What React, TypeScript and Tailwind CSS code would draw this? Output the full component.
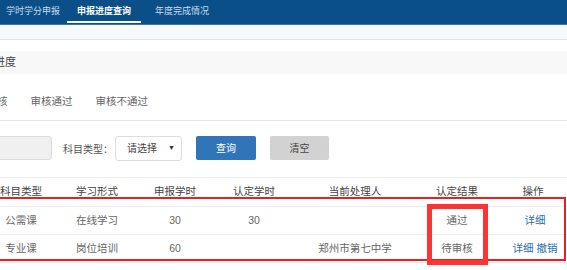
const rows = [
  { kind: '公需课', form: '在线学习', apply: '30', approved: '30', handler: '', result: '通过', ops: ['详细'] },
  { kind: '专业课', form: '岗位培训', apply: '60', approved: '', handler: '郑州市第七中学', result: '待审核', ops: ['详细', '撤销'] },
  { kind: '公需课', form: '在线学习', apply: '30', approved: '30', handler: '', result: '通过', ops: ['详细'] },
];

const cols = 'grid grid-cols-[76px_76px_80px_78px_124px_80px_72px]';

export default function App() {
  return (
    <div className="w-[567px] h-[270px] overflow-hidden bg-white relative font-['Liberation_Sans','Noto_Sans_CJK_SC',sans-serif]">
      {/* top nav */}
      <div className="h-[25px] bg-[#0b4f88] border-b border-[#3f77a8] flex text-[9px] leading-none">
        <div className="w-[64px] pl-[6px] pt-[7px] text-[#c9dcee]">学时学分申报</div>
        <div className="w-[80px] flex flex-col items-center pt-[7px] text-white font-bold">
          <span>申报进度查询</span>
          <span className="mt-[5px] h-[2px] w-[74px] bg-white" />
        </div>
        <div className="pl-[11px] pt-[7px] text-[#c9dcee]">年度完成情况</div>
      </div>
      <div className="h-[15px] bg-[#f6f8f9] border-b border-[#e2e4e6]" />
      <div className="h-[11px]" />
      <div className="h-[23px] bg-[#f8f8f8] flex items-center text-[11px] text-[#444]">
        <span className="-ml-[28px]">申报进度</span>
      </div>

      {/* status tabs */}
      <div className="h-[47px] border-b border-[#e6e6e6] flex items-end pb-[10px] gap-[23px] text-[10.5px] text-[#666]">
        <span className="-ml-[24px]">待审核</span>
        <span>审核通过</span>
        <span>审核不通过</span>
      </div>

      {/* filter */}
      <div className="h-[57px] border-b border-[#eeeeee] flex items-start pt-[15px] text-[10px] text-[#555]">
        <div className="-ml-[100px] w-[152px] h-[24px] bg-[#f0f0f0] border border-[#dcdcdc] rounded-[3px]" />
        <span className="ml-[11px] mt-[6px]">科目类型：</span>
        <div className="ml-[2px] w-[67px] h-[25px] border border-[#dddddd] rounded-[3px] bg-white flex items-center pl-[11px] pr-[6px] justify-between">
          <span className="text-[10px] text-[#444]">请选择</span>
          <span className="text-[7px] text-[#333]">▼</span>
        </div>
        <button className="ml-[14px] w-[60px] h-[24px] bg-[#2f75b8] text-white text-[10px] rounded-[2px]">查询</button>
        <button className="ml-[14px] w-[59px] h-[24px] bg-[#d2d2d2] text-[#444] text-[10px] rounded-[2px]">清空</button>
      </div>

      {/* table */}
      <div className="relative -ml-[17px] text-[10.5px]">
        <div className={`${cols} h-[28px] items-center text-[#444] text-center`}>
          <span>科目类型</span>
          <span>学习形式</span>
          <span>申报学时</span>
          <span>认定学时</span>
          <span>当前处理人</span>
          <span>认定结果</span>
          <span>操作</span>
        </div>
        {rows.map((r, i) => (
          <div key={i} className={`${cols} h-[28px] items-center text-[#666] text-center border-t border-[#eeeeee]`}>
            <span>{r.kind}</span>
            <span>{r.form}</span>
            <span>{r.apply}</span>
            <span>{r.approved}</span>
            <span>{r.handler}</span>
            <span>{r.result}</span>
            <span className="flex justify-center gap-[3px] pl-[4px] text-[#2a6cae]">
              {r.ops.map(o => <span key={o}>{o}</span>)}
            </span>
          </div>
        ))}
        {/* annotation boxes */}
        <div className="absolute left-[0px] top-[19px] w-[583px] h-[64px] border-2 border-[#e02424]" />
        <div className="absolute left-[444px] top-[26px] w-[61px] h-[61px] border-[5px] border-[#ff3333]" />
      </div>
    </div>
  );
}
